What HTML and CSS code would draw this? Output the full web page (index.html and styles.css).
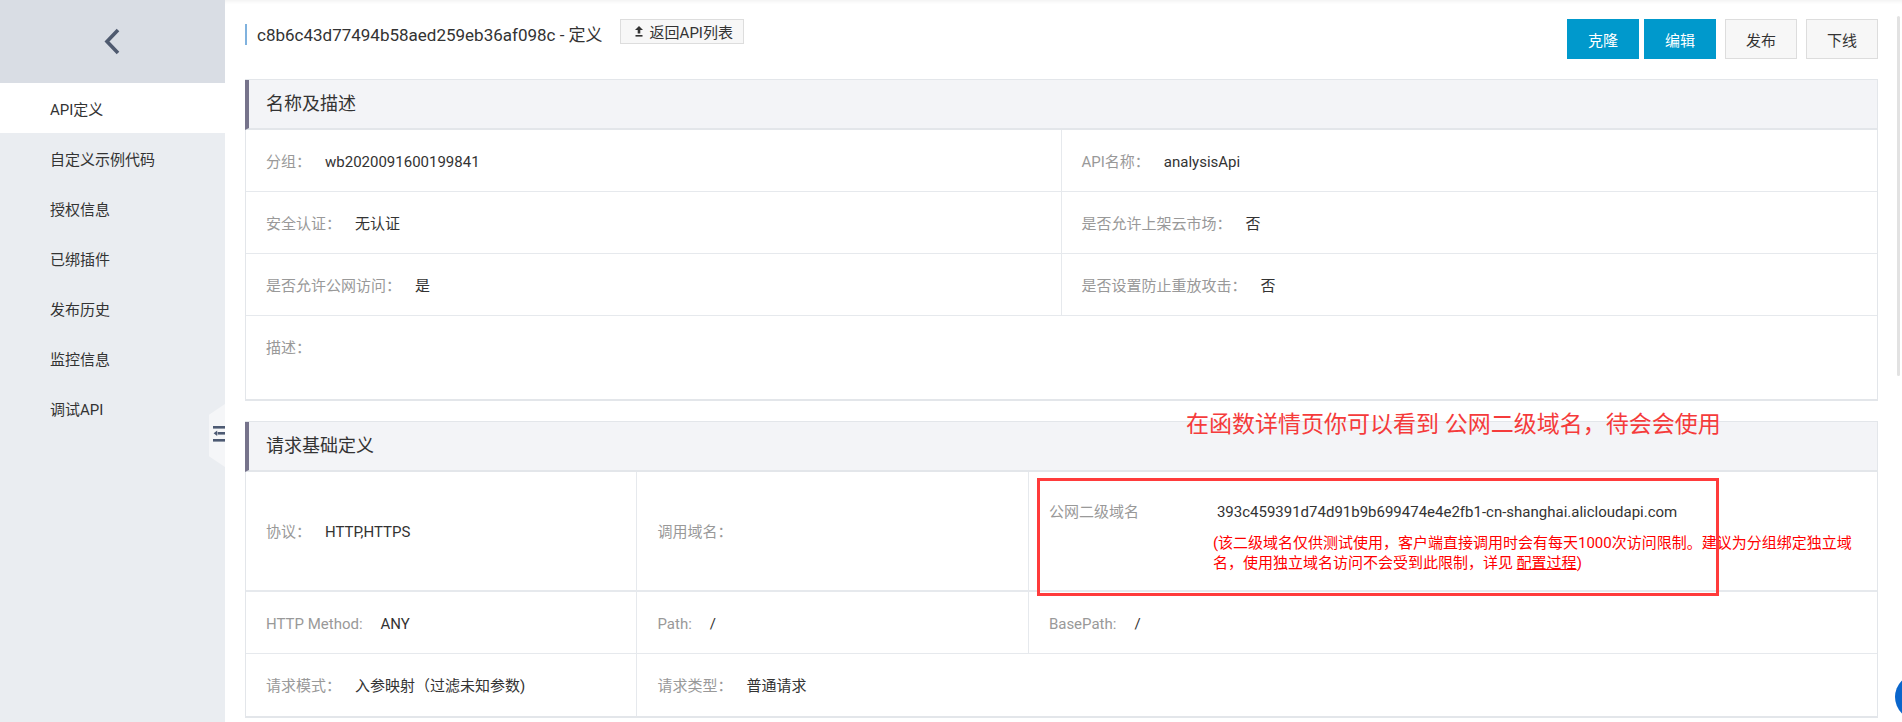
FILE: index.html
```html
<!DOCTYPE html>
<html lang="zh-CN">
<head>
    <meta charset="UTF-8">
    <meta name="viewport" content="width=device-width, initial-scale=1.0">
    <title>API定义</title>
    <link rel="stylesheet" href="styles.css">
</head>
<body>
    <div class="layout">
        <aside class="sidebar">
            <div class="side-top">
                <svg width="20" height="28" viewBox="0 0 20 28"><polyline points="15,2 4,13.5 15,25" fill="none" stroke="#4f5a6f" stroke-width="3.6"/></svg>
            </div>
            <ul class="side-nav">
                <li class="active">API定义</li>
                <li>自定义示例代码</li>
                <li>授权信息</li>
                <li>已绑插件</li>
                <li>发布历史</li>
                <li>监控信息</li>
                <li>调试API</li>
            </ul>
            <div class="collapse-tab">
                <svg width="16" height="63" viewBox="0 0 16 63">
                    <rect x="4" y="22" width="12" height="2.6" fill="#4d5a73"/>
                    <path d="M4.6 29.3 L8.2 26.6 L8.2 32 Z" fill="#4d5a73"/>
                    <rect x="8.6" y="28" width="7.4" height="2.6" fill="#4d5a73"/>
                    <rect x="4" y="35" width="12" height="2.6" fill="#4d5a73"/>
                </svg>
            </div>
        </aside>

        <main class="main">
            <div class="page-head">
                <div class="page-title">
                    <h2>c8b6c43d77494b58aed259eb36af098c - 定义</h2>
                    <button class="btn-back">
                        <svg width="8" height="11" viewBox="0 0 8 11"><path d="M4 0 L8 4 L5.3 4 L5.3 7.5 L2.7 7.5 L2.7 4 L0 4 Z" fill="#333"/><rect x="0.5" y="9" width="7" height="1.6" fill="#333"/></svg>
                        返回API列表
                    </button>
                </div>
                <div class="actions">
                    <button class="btn btn-primary">克隆</button>
                    <button class="btn btn-primary">编辑</button>
                    <button class="btn btn-default">发布</button>
                    <button class="btn btn-default">下线</button>
                </div>
            </div>

            <section class="panel">
                <div class="panel-head">名称及描述</div>
                <div class="fields fields-2">
                    <div class="field col-line"><span class="label">分组：</span>wb2020091600199841</div>
                    <div class="field"><span class="label">API名称：</span>analysisApi</div>
                    <div class="field col-line"><span class="label">安全认证：</span>无认证</div>
                    <div class="field"><span class="label">是否允许上架云市场：</span>否</div>
                    <div class="field col-line"><span class="label">是否允许公网访问：</span>是</div>
                    <div class="field"><span class="label">是否设置防止重放攻击：</span>否</div>
                    <div class="field field-desc"><span class="label">描述：</span></div>
                </div>
            </section>

            <section class="panel">
                <div class="panel-head">请求基础定义</div>
                <div class="fields fields-3">
                    <div class="field field-tall col-line"><span class="label">协议：</span>HTTP,HTTPS</div>
                    <div class="field field-tall col-line"><span class="label">调用域名：</span></div>
                    <div class="field field-tall field-domain">
                        <span class="domain-label">公网二级域名</span>
                        <div class="domain-info">
                            <div class="domain">393c459391d74d91b9b699474e4e2fb1-cn-shanghai.alicloudapi.com</div>
                            <div class="domain-note">(该二级域名仅供测试使用，客户端直接调用时会有每天1000次访问限制。建议为分组绑定独立域名，使用独立域名访问不会受到此限制，详见 <a href="#">配置过程</a>)</div>
                        </div>
                    </div>
                    <div class="field col-line"><span class="label label-en">HTTP Method:</span>ANY</div>
                    <div class="field col-line"><span class="label label-en">Path:</span>/</div>
                    <div class="field"><span class="label label-en">BasePath:</span>/</div>
                    <div class="field field-last col-line"><span class="label">请求模式：</span>入参映射（过滤未知参数)</div>
                    <div class="field field-last span-2"><span class="label">请求类型：</span>普通请求</div>
                </div>
            </section>
        </main>

        <!-- 标注 -->
        <div class="note-text">在函数详情页你可以看到 公网二级域名，待会会使用</div>
        <div class="note-box"></div>

        <div class="scroll-thumb"></div>
        <div class="float-btn"></div>
    </div>
</body>
</html>
```

FILE: styles.css
```css
* {
    box-sizing: border-box;
}

body {
    margin: 0;
    font-family: Roboto, "Noto Sans CJK SC", sans-serif;
    font-size: 15px;
    color: #333;
    background: #fff;
    overflow: hidden;
}

.layout {
    display: flex;
    height: 722px;
    position: relative;
    overflow: hidden;
}

/* 左侧菜单 */
.sidebar {
    width: 225px;
    flex: none;
    background: #eaedf1;
    position: relative;
}

.side-top {
    height: 83px;
    background: #d9dde4;
    display: flex;
    align-items: center;
    justify-content: center;
}

.side-nav {
    list-style: none;
    margin: 0;
    padding: 0;
}

.side-nav li {
    height: 50px;
    line-height: 45px;
    padding: 5px 0 0 50px;
}

.side-nav li.active {
    background: #fff;
}

.collapse-tab {
    position: absolute;
    left: 209px;
    top: 404px;
    width: 16px;
    height: 63px;
    background: #f5f6f8;
    clip-path: polygon(100% 0, 0 17%, 0 83%, 100% 100%);
}

.collapse-tab svg {
    display: block;
}

/* 主体 */
.main {
    flex: 1;
    padding: 19px 24px 0 20px;
    box-shadow: inset 0 4px 4px -3px rgba(0, 0, 0, 0.07);
}

.page-head {
    display: flex;
    justify-content: space-between;
    align-items: flex-start;
    height: 40px;
    margin-bottom: 20px;
}

.page-title {
    display: flex;
    align-items: flex-start;
}

.page-title h2 {
    margin: 5px 0 0;
    font-size: 17px;
    font-weight: normal;
    line-height: 20px;
    border-left: 2px solid #80b2de;
    padding: 1px 0 0 10px;
}

.btn-back {
    margin-left: 17px;
    height: 25px;
    display: inline-flex;
    align-items: center;
    gap: 7px;
    padding: 0 10px 0 14px;
    background: #f7f7f7;
    border: 1px solid #ddd;
    font-family: inherit;
    font-size: 15px;
    color: #333;
}

.actions {
    display: flex;
}

.btn {
    width: 72px;
    height: 40px;
    font-family: inherit;
    font-size: 15px;
    border: 1px solid;
    cursor: pointer;
}

.btn + .btn {
    margin-left: 5px;
}

.btn-primary {
    background: #0099cc;
    border-color: #0099cc;
    color: #fff;
}

.btn-default {
    background: #f7f7f7;
    border-color: #ddd;
    color: #333;
}

.btn-default.btn {
    margin-left: 9px;
}

/* 面板 */
.panel {
    border: 1px solid #e3e6ea;
    border-bottom-width: 2px;
    margin-bottom: 20px;
}

.panel-head {
    height: 50px;
    line-height: 48px;
    margin-left: -1px;
    padding-left: 17px;
    background: #f3f4f7;
    border-left: 4px solid #76738b;
    border-bottom: 2px solid #e3e6ea;
    font-size: 18px;
}

.fields {
    display: grid;
}

.fields-2 {
    grid-template-columns: 1fr 1fr;
}

.fields-3 {
    grid-template-columns: 24% 24% 1fr;
}

.field {
    height: 62px;
    display: flex;
    align-items: center;
    padding: 2px 0 0 20px;
    border-bottom: 1px solid #e6e9ed;
    line-height: 20px;
}

.col-line {
    border-right: 1px solid #e6e9ed;
}

.label {
    color: #999;
    margin-right: 14px;
}

.label-en {
    margin-right: 18px;
}

.field-desc {
    grid-column: 1 / -1;
    height: 83px;
    align-items: flex-start;
    padding-top: 22px;
    border-bottom: none;
}

.field-tall {
    height: 120px;
    border-bottom-width: 2px;
}

.field-last {
    border-bottom: none;
}

.span-2 {
    grid-column: 2 / 4;
}

.field-domain {
    align-items: flex-start;
    padding-top: 30px;
}

.domain-label {
    width: 164px;
    flex: none;
    color: #999;
}

.domain-info {
    width: 646px;
}

.domain {
    padding-left: 4px;
}

.domain-note {
    margin-top: 11px;
    color: #f00;
}

.domain-note a {
    color: #f00;
}

/* 标注 */
.note-text {
    position: absolute;
    left: 1186px;
    top: 410px;
    font-size: 23px;
    line-height: 30px;
    color: #f53b3b;
    white-space: nowrap;
}

.note-box {
    position: absolute;
    left: 1037px;
    top: 478px;
    width: 682px;
    height: 118px;
    border: 3px solid #ff3b3b;
}

.scroll-thumb {
    position: absolute;
    left: 1897px;
    top: 16px;
    width: 3px;
    height: 360px;
    background: #e2e2e2;
    border-radius: 2px;
}

.float-btn {
    position: absolute;
    left: 1895px;
    top: 674px;
    width: 46px;
    height: 46px;
    border-radius: 50%;
    background: #0a66cc;
}
```
